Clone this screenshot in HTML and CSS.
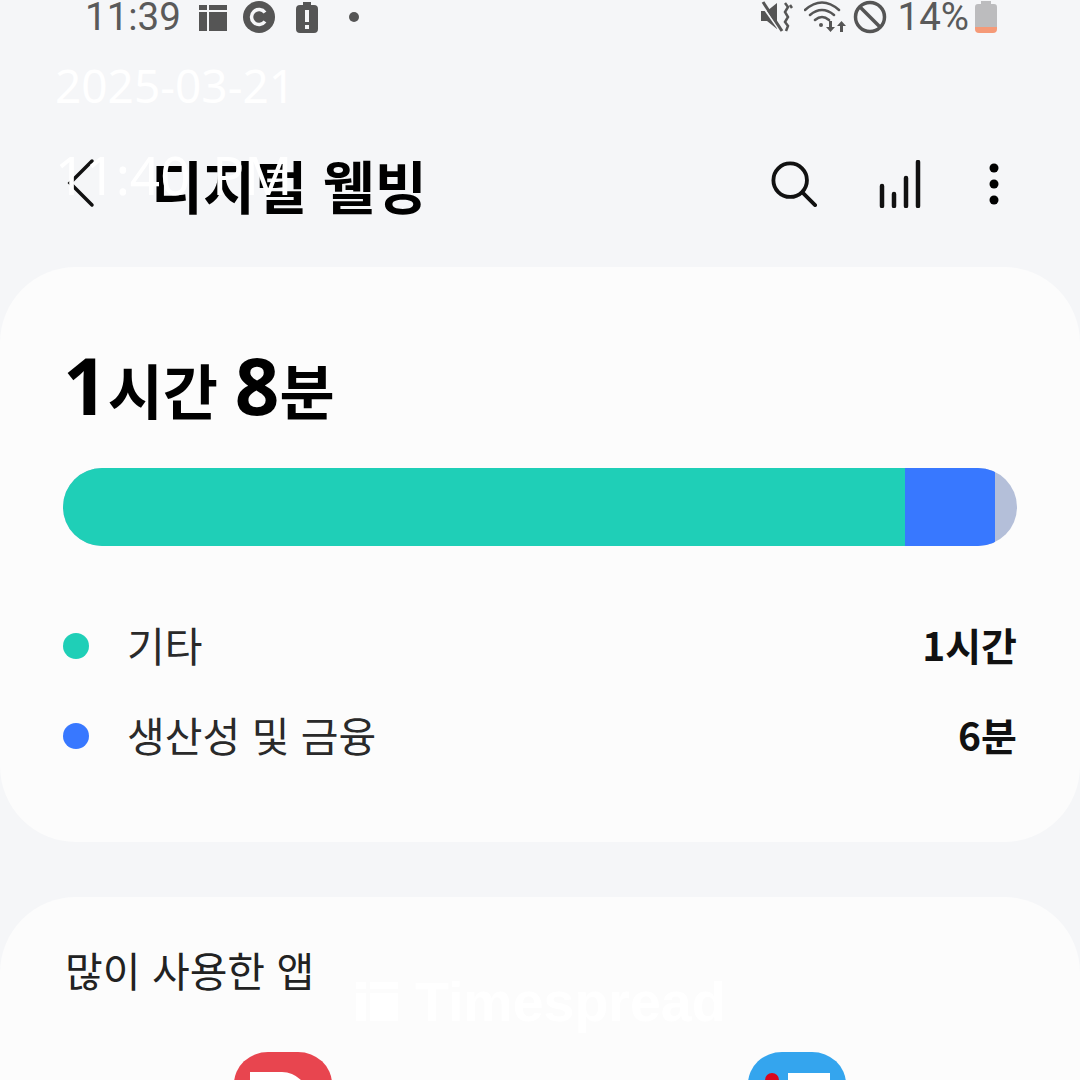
FILE: index.html

```html
<!DOCTYPE html>
<html lang="ko">
<head>
    <meta charset="utf-8">
    <title>디지털 웰빙</title>
    <link rel="stylesheet" href="styles.css">
</head>
<body>

<div class="statusBar">
    <div class="statusLeft">
        <span class="clock">11:39</span>
        <svg class="statIcon iconGrid" width="30" height="30" viewBox="0 0 30 30"><path fill="#555" d="M1 3h8v5H1zM11 3h18v5H11zM1 10h8v19H1zM11 10h18v19H11z"/></svg>
        <svg class="statIcon iconCopy" width="34" height="34" viewBox="0 0 34 34"><circle cx="17" cy="17" r="16" fill="#555"/><path fill="none" stroke="#f5f6f8" stroke-width="3.500" d="M23 12.500a7.500 7.500 0 1 0 0 9"/></svg>
        <svg class="statIcon iconAlert" width="22" height="31" viewBox="0 0 22 31"><path fill="#555" d="M7 0h8v3h3q4 0 4 4v20q0 4-4 4H4q-4 0-4-4V7q0-4 4-4h3z"/><path fill="#f5f6f8" d="M9 8h4v12H9zM9 23h4v4H9z"/></svg>
        <span class="dot"></span>
    </div>
    <div class="statusRight">
        <svg class="iconMute" width="32" height="32" viewBox="0 0 32 32"><path fill="#555" d="M0 10h6l10-8v26L6 20H0z"/><path stroke="#f5f6f8" stroke-width="2" d="M0 3l19 27"/><path stroke="#555" stroke-width="3" d="M2 1l19 29"/><path fill="none" stroke="#555" stroke-width="2.500" d="M24 2l3 4-3 5 3 5-3 5 3 4-2 5M29 4l2 3"/></svg>
        <svg width="42" height="34" viewBox="0 0 42 34"><g fill="none" stroke="#555" stroke-width="2.500" stroke-linecap="round"><path d="M1 10q17-15 34 0M6 15q12-10 24 0M11 20q7-6 14 0"/></g><circle cx="17" cy="25" r="2" fill="#555"/><path fill="#555" d="M25 21h3v6h3l-4.500 5-4.500-5h3zM36 32h3v-6h3l-4.500-5-4.500 5h3z"/></svg>
        <svg class="noIcon" width="34" height="34" viewBox="0 0 34 34"><circle cx="17" cy="17" r="14.500" fill="none" stroke="#555" stroke-width="3.500"/><path stroke="#555" stroke-width="3.500" d="M7 7l20 20"/></svg>
        <span class="battPct">14%</span>
        <svg class="iconBatt" width="24" height="32" viewBox="0 0 24 32"><path fill="#bcbcbe" d="M7 0h10v3h3q3 0 3 3v20H1V6q0-3 3-3h3z"/><path fill="#f59a78" d="M1 26h22v2q0 4-4 4H5q-4 0-4-4z"/></svg>
    </div>
</div>

<div class="topBar">
    <div class="titleSide">
        <svg class="backIcon" width="30" height="52" viewBox="0 0 30 52"><path fill="none" stroke="#111" stroke-width="3.500" stroke-linecap="round" d="M25 3L3 25l22 22"/></svg>
        <h1 class="pageTitle">디지털 웰빙</h1>
    </div>
    <div class="actions">
        <svg class="iconSearch" width="46" height="46" viewBox="0 0 48 48"><circle cx="20" cy="20" r="17.500" fill="none" stroke="#111" stroke-width="4"/><path stroke="#111" stroke-width="4" stroke-linecap="round" d="M33 33l13 13"/></svg>
        <svg class="iconBars" width="44" height="48" viewBox="0 0 44 48"><path stroke="#111" stroke-width="4.500" stroke-linecap="round" d="M4 26v20M16 34v12M28 18v28M40 2v44"/></svg>
        <svg class="iconMore" width="12" height="44" viewBox="0 0 12 44"><circle cx="6" cy="6" r="4.500"/><circle cx="6" cy="22" r="4.500"/><circle cx="6" cy="38" r="4.500"/></svg>
    </div>
</div>

<section class="card usageCard">
    <div class="totalTime"><b>1</b>시간 <b>8</b>분</div>
    <div class="usageBar">
        <div class="seg segTeal"></div>
        <div class="seg segBlue"></div>
    </div>
    <ul class="legend">
        <li class="legendRow"><span class="legendDot dotTeal"></span><span class="legendName">기타</span><span class="legendVal">1시간</span></li>
        <li class="legendRow"><span class="legendDot dotBlue"></span><span class="legendName">생산성 및 금융</span><span class="legendVal">6분</span></li>
    </ul>
</section>

<section class="card appsCard">
    <h2 class="appsTitle">많이 사용한 앱</h2>
    <div class="appIcons">
        <div class="appIcon appRed"><span class="redGlyph"></span></div>
        <div class="appIcon appBlue"><span class="blueDot"></span><span class="blueGlyph"></span></div>
    </div>
</section>

<!-- overlay stamps from the capture app -->
<div class="stampDate">2025-03-21</div>
<div class="stampTime">11:40 PM</div>
<div class="stampBrand">
    <svg width="44" height="42" viewBox="0 0 44 42"><path fill="#fff" d="M1 1h10v7H1zM15 12h28v28H15zM1 12h10v28H1zM15 1h28v7H15z"/></svg>
    <span>Timespread</span>
</div>

</body>
</html>
```

FILE: styles.css

```css
html, body {
    margin: 0;
    padding: 0;
}

body {
    width: 1080px;
    height: 1080px;
    overflow: hidden;
    position: relative;
    background-color: #f5f6f8;
    font-family: "Noto Sans CJK KR", "Noto Sans", sans-serif;
    color: #111;
}

/* status bar */
.statusBar {
    height: 34px;
    padding: 0 82px 0 85px;
    display: flex;
    justify-content: space-between;
    align-items: center;
    color: #555;
}

.statusLeft, .statusRight {
    display: flex;
    align-items: center;
}

.clock, .battPct {
    font-family: Roboto, sans-serif;
    font-size: 38.5px;
    line-height: 34px;
    color: #5a5a5a;
}

.iconGrid {
    margin-left: 17px;
}

.iconCopy {
    margin-left: 14px;
}

.iconAlert {
    margin-left: 20px;
}

.dot {
    width: 10px;
    height: 10px;
    margin-left: 31px;
    border-radius: 50%;
    background-color: #555;
}

.statusRight {
    gap: 10px;
}

.iconMute {
    margin-right: 1px;
}

.noIcon {
    margin-left: -3px;
    margin-right: 1px;
}

.battPct {
    margin-right: -5px;
}

/* title row */
.topBar {
    height: 233px;
    padding: 66px 80px 0 67px;
    box-sizing: border-box;
    display: flex;
    justify-content: space-between;
    align-items: center;
}

.titleSide {
    display: flex;
    align-items: center;
}

.pageTitle {
    margin: 0 0 0 54px;
    font-size: 56.5px;
    font-weight: 700;
    line-height: 60px;
    color: #000;
}

.actions {
    display: flex;
    align-items: center;
}

.iconBars {
    margin-left: 61px;
}

.iconMore {
    margin-left: 66px;
}

/* cards */
.card {
    background-color: #fcfcfc;
    border-radius: 76px;
}

.usageCard {
    height: 575px;
    box-sizing: border-box;
    padding: 78px 63px 0;
    margin-bottom: 55px;
}

.totalTime {
    height: 80px;
    font-size: 60px;
    font-weight: 700;
    line-height: 80px;
    white-space: nowrap;
    color: #000;
}

.totalTime b {
    font-family: "Noto Sans", sans-serif;
    font-size: 78px;
    font-weight: 700;
}

.usageBar {
    display: flex;
    height: 78px;
    margin-top: 43px;
    border-radius: 39px;
    overflow: hidden;
    background-color: #b4bfd9;
}

.segTeal {
    width: 842px;
    background-color: #1fcfb7;
}

.segBlue {
    width: 90px;
    background-color: #3878ff;
}

.legend {
    list-style: none;
    margin: 55px 0 0;
    padding: 0;
}

.legendRow {
    display: flex;
    align-items: center;
    height: 90px;
    font-size: 41px;
    line-height: 50px;
}

.legendDot {
    width: 26px;
    height: 26px;
    border-radius: 50%;
}

.dotTeal {
    background-color: #1fcfb7;
}

.dotBlue {
    background-color: #3878ff;
}

.legendName {
    margin-left: 38px;
    padding-bottom: 4px;
    color: #2a2a2a;
}

.legendVal {
    margin-left: auto;
    padding-bottom: 4px;
    font-size: 39px;
    font-weight: 700;
}

/* second card runs off the bottom of the screen */
.appsCard {
    height: 183px;
    box-sizing: border-box;
    padding: 44px 65px 0;
    border-radius: 76px 76px 0 0;
    overflow: hidden;
}

.appsTitle {
    margin: 0;
    font-size: 41px;
    font-weight: 400;
    line-height: 56px;
    color: #222;
}

.appIcons {
    display: flex;
    margin-top: 55px;
    padding-left: 169px;
    gap: 416px;
}

.appIcon {
    flex: none;
    width: 98px;
    height: 98px;
    border-radius: 34px / 32px;
    position: relative;
    overflow: hidden;
}

.appRed {
    background-color: #e8454f;
}

.redGlyph {
    position: absolute;
    left: 16px;
    top: 20px;
    width: 58px;
    height: 60px;
    border-radius: 0 26px 0 0;
    background-color: #fff;
}

.appBlue {
    background-color: #34a5ee;
}

.blueDot {
    position: absolute;
    left: 17px;
    top: 21px;
    width: 14px;
    height: 30px;
    border-radius: 7px;
    background-color: #d9061c;
}

.blueGlyph {
    position: absolute;
    left: 40px;
    top: 21px;
    width: 42px;
    height: 60px;
    background-color: #fff;
}

/* stamps lie over the page */
.stampDate, .stampTime {
    position: absolute;
    left: 55px;
    font-family: "Noto Sans", sans-serif;
    color: #fff;
    line-height: 1;
}

.stampDate {
    top: 62px;
    font-size: 46px;
}

.stampTime {
    top: 148px;
    font-size: 53px;
    word-spacing: 8px;
}

.stampBrand {
    position: absolute;
    left: 355px;
    top: 970px;
    display: flex;
    align-items: center;
    gap: 16px;
    font-family: "Liberation Sans", sans-serif;
    font-size: 55.5px;
    font-weight: 700;
    color: #fff;
}
```
